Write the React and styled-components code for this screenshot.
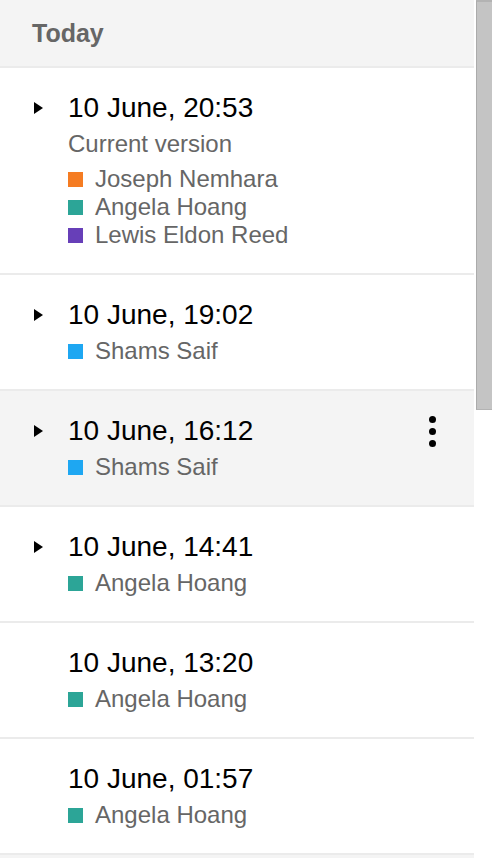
import React from 'react';
import styled, { createGlobalStyle } from 'styled-components';

const GlobalStyle = createGlobalStyle`
  html, body {
    margin: 0;
    padding: 0;
    background: #ffffff;
  }
  body {
    font-family: "Liberation Sans", Arial, sans-serif;
  }
`;

// Version history data
const versions = [
  {
    time: '10 June, 20:53',
    current: true,
    expandable: true,
    editors: [
      { name: 'Joseph Nemhara', color: '#f57c22' },
      { name: 'Angela Hoang', color: '#2ca597' },
      { name: 'Lewis Eldon Reed', color: '#673fb8' },
    ],
  },
  {
    time: '10 June, 19:02',
    expandable: true,
    editors: [{ name: 'Shams Saif', color: '#1ea7f2' }],
  },
  {
    time: '10 June, 16:12',
    expandable: true,
    selected: true,
    editors: [{ name: 'Shams Saif', color: '#1ea7f2' }],
  },
  {
    time: '10 June, 14:41',
    expandable: true,
    editors: [{ name: 'Angela Hoang', color: '#2ca597' }],
  },
  {
    time: '10 June, 13:20',
    editors: [{ name: 'Angela Hoang', color: '#2ca597' }],
  },
  {
    time: '10 June, 01:57',
    editors: [{ name: 'Angela Hoang', color: '#2ca597' }],
  },
];

const Layout = styled.div`
  display: flex;
  width: 492px;
  height: 858px;
  overflow: hidden;
`;

const Panel = styled.div`
  width: 474px;
  flex-shrink: 0;
  display: flex;
  flex-direction: column;
`;

const ScrollTrack = styled.div`
  width: 18px;
  padding-left: 2px;
  box-sizing: border-box;
  background: #ffffff;
`;

const ScrollThumb = styled.div`
  height: 410px;
  background: #c4c4c4;
  border-left: 1px solid #ababab;
  border-top: 2px solid #b3b3b3;
  border-bottom: 1px solid #b3b3b3;
  box-sizing: border-box;
`;

const SectionHeader = styled.div`
  height: 66px;
  background: #f4f4f4;
  border-bottom: 2px solid #ebebeb;
  display: flex;
  align-items: center;
  padding-left: 32px;
  flex-shrink: 0;
  font-size: 25px;
  font-weight: bold;
  color: #666666;
`;

const Row = styled.div`
  display: flex;
  align-items: flex-start;
  padding: 24px 0 24px 0;
  background: ${(p) => (p.$selected ? '#f4f4f4' : '#ffffff')};
  border-bottom: 2px solid #ebebeb;
  flex-shrink: 0;
`;

const Toggle = styled.div`
  width: 68px;
  height: 32px;
  flex-shrink: 0;
  display: flex;
  align-items: center;
  padding-left: 34px;
  box-sizing: border-box;
`;

const Caret = styled.span`
  width: 0;
  height: 0;
  border-top: 6.5px solid transparent;
  border-bottom: 6.5px solid transparent;
  border-left: 9px solid #000000;
`;

const Body = styled.div`
  flex: 1;
  display: flex;
  flex-direction: column;
`;

const Time = styled.div`
  font-size: 28px;
  line-height: 32px;
  color: #000000;
  margin-bottom: 6px;
`;

const SubLine = styled.div`
  display: flex;
  align-items: center;
  font-size: 24px;
  line-height: 28px;
  color: #666666;
  white-space: nowrap;
  margin-bottom: ${(p) => (p.$label ? '7px' : '0')};
`;

const Swatch = styled.span`
  width: 15px;
  height: 15px;
  margin-right: 12px;
  flex-shrink: 0;
  background: ${(p) => p.$color};
`;

const MoreButton = styled.div`
  width: 60px;
  height: 32px;
  margin-right: 12px;
  display: flex;
  flex-direction: column;
  align-items: center;
  justify-content: center;
  gap: 5px;
  flex-shrink: 0;
`;

const Dot = styled.span`
  width: 7px;
  height: 7px;
  border-radius: 50%;
  background: #000000;
`;

const VersionRow = ({ version }) => (
  <Row $selected={version.selected}>
    <Toggle>{version.expandable && <Caret />}</Toggle>
    <Body>
      <Time>{version.time}</Time>
      {version.current && <SubLine $label>Current version</SubLine>}
      {version.editors.map((editor) => (
        <SubLine key={editor.name}>
          <Swatch $color={editor.color} />
          {editor.name}
        </SubLine>
      ))}
    </Body>
    {version.selected && (
      <MoreButton>
        <Dot />
        <Dot />
        <Dot />
      </MoreButton>
    )}
  </Row>
);

export default function App() {
  return (
    <>
      <GlobalStyle />
      <Layout>
        <Panel>
          <SectionHeader>Today</SectionHeader>
          {versions.map((v) => (
            <VersionRow key={v.time} version={v} />
          ))}
          <Row $selected />
        </Panel>
        <ScrollTrack>
          <ScrollThumb />
        </ScrollTrack>
      </Layout>
    </>
  );
}
